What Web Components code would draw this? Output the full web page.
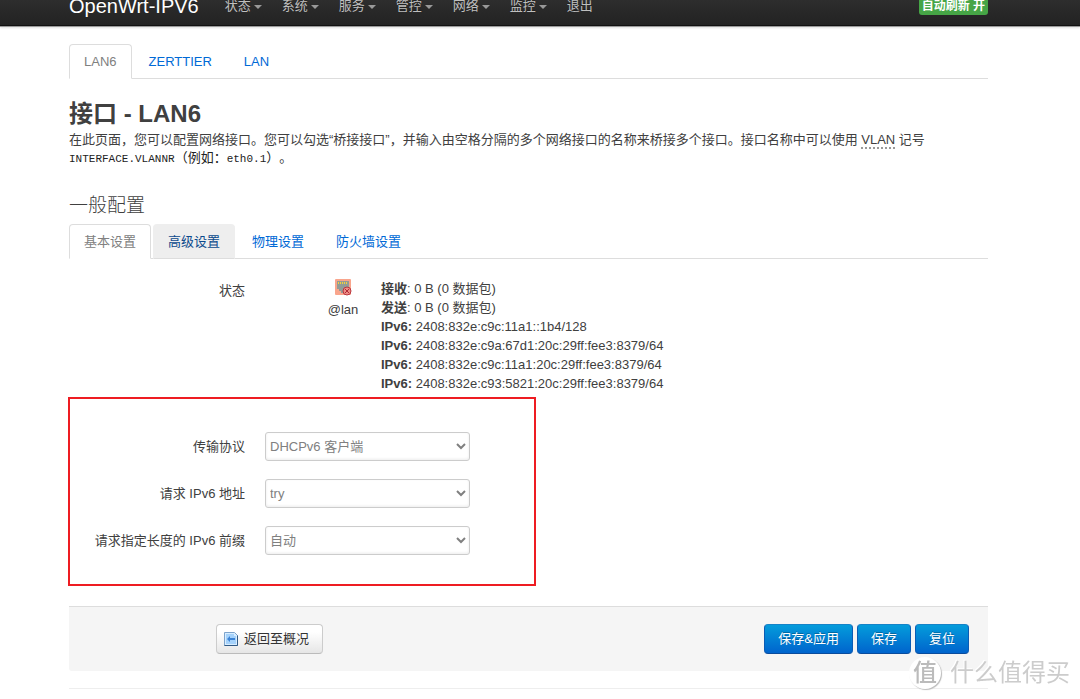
<!DOCTYPE html>
<html lang="zh-CN">
<head>
<meta charset="utf-8">
<title>OpenWrt-IPV6 - 接口</title>
<style>
  html { background: #fff; }
  body {
    margin: 0;
    font: 13px/18px "Liberation Sans", "Noto Sans CJK SC", sans-serif;
    color: #404040;
    overflow-x: hidden;
  }
</style>
</head>
<body>
<lu-topbar brand="OpenWrt-IPV6">
  <a href="#status" data-menu>状态</a>
  <a href="#system" data-menu>系统</a>
  <a href="#services" data-menu>服务</a>
  <a href="#control" data-menu>管控</a>
  <a href="#network" data-menu>网络</a>
  <a href="#monitor" data-menu>监控</a>
  <a href="#logout">退出</a>
  <button slot="refresh" type="button">自动刷新 开</button>
</lu-topbar>
<lu-page>
  <lu-tabs>
    <a href="#lan6" aria-current="page">LAN6</a>
    <a href="#zerttier">ZERTTIER</a>
    <a href="#lan">LAN</a>
  </lu-tabs>
  <lu-intro>
    <span slot="title">接口 - LAN6</span>
    <lu-description></lu-description>
  </lu-intro>
  <lu-section heading="一般配置">
    <lu-tabs>
      <a href="#general" aria-current="page">基本设置</a>
      <a href="#advanced" class="hover">高级设置</a>
      <a href="#physical">物理设置</a>
      <a href="#firewall">防火墙设置</a>
    </lu-tabs>
    <lu-status></lu-status>
    <lu-group>
      <lu-select label="传输协议" options="DHCPv6 客户端|静态地址|DHCP 客户端"></lu-select>
      <lu-select label="请求 IPv6 地址" options="try|force|none"></lu-select>
      <lu-select label="请求指定长度的 IPv6 前缀" options="自动|已禁用|48|56|64"></lu-select>
    </lu-group>
  </lu-section>
  <lu-actions></lu-actions>
  <lu-footer></lu-footer>
</lu-page>
<lu-watermark></lu-watermark>

<script>
class LuElement extends HTMLElement {
  connectedCallback() {
    if (this.shadowRoot) return;
    this.attachShadow({ mode: 'open' }).innerHTML = this.render();
  }
}

customElements.define('lu-topbar', class extends LuElement {
  render() {
    return `<style>
      :host { display: block; margin-top: -13px; padding-right: 23px; height: 39px;
        background: linear-gradient(#333, #222); box-shadow: inset 0 -1px 0 #111, 0 1px 0 #9a9a9a, 0 2px 2px rgba(0,0,0,.12); }
      .inner { display: flex; align-items: center; height: 38px; max-width: 919px; margin: 0 auto; }
      .brand { color: #fff; font-size: 20px; line-height: 38px; text-decoration: none; margin-right: 16px; text-shadow: 0 -1px 0 rgba(0,0,0,.3); }
      nav { display: flex; flex: 1; }
      ::slotted(a) { color: #bfbfbf; text-decoration: none; padding: 0 10px; line-height: 38px; text-shadow: 0 -1px 0 rgba(0,0,0,.3); }
      ::slotted(a[data-menu])::after { content: ""; display: inline-block; vertical-align: middle; margin-left: 3px;
        border: 4px solid transparent; border-top-color: #999; border-bottom: 0; }
      ::slotted(button) { font: bold 12px/16px "Liberation Sans", "Noto Sans CJK SC", sans-serif; color: #fff;
        background: #46a546; border: 0; border-radius: 3px; padding: 1px 3px; white-space: nowrap; }
    </style>
    <div class="inner"><a class="brand" href="#home">${this.getAttribute('brand')}</a>
      <nav><slot></slot></nav><slot name="refresh"></slot></div>`;
  }
});

customElements.define('lu-page', class extends LuElement {
  render() {
    return `<style>
      :host { display: block; padding: 18px 23px 0 0; }
      main { max-width: 919px; margin: 0 auto; }
    </style><main><slot></slot></main>`;
  }
});

customElements.define('lu-tabs', class extends LuElement {
  render() {
    return `<style>
      :host { display: block; border-bottom: 1px solid #ddd; }
      nav { display: flex; gap: 2px; margin-bottom: -1px; }
      ::slotted(a) { color: #0069d6; text-decoration: none; padding: 0 14px; border: 1px solid transparent;
        line-height: 33px; border-radius: 4px 4px 0 0; }
      ::slotted(a.hover) { background: #eee; border-color: #eee #eee #ddd; color: #0b4a8c; }
      ::slotted(a[aria-current]) { background: #fff; color: #808080; border-color: #ddd #ddd #fff; }
    </style><nav><slot></slot></nav>`;
  }
});

customElements.define('lu-intro', class extends LuElement {
  render() {
    return `<style>
      :host { display: block; padding-top: 17px; }
      h2 { margin: 0; font-size: 24px; line-height: 35px; }
    </style><h2><slot name="title"></slot></h2><slot></slot>`;
  }
});

customElements.define('lu-description', class extends LuElement {
  render() {
    return `<style>
      :host { display: block; }
      p { margin: 0; }
      .example { text-spacing-trim: space-all; }
      abbr { text-decoration: none; border-bottom: 2px dotted #999; line-height: 14px; display: inline-block; }
      code { font: 11px/18px "Liberation Mono", "Noto Sans CJK SC", monospace; color: #222; }
      code span { font-size: 13px; }
    </style>
    <p>在此页面，您可以配置网络接口。您可以勾选“桥接接口”，并输入由空格分隔的多个网络接口的名称来桥接多个接口。接口名称中可以使用 <abbr title="Virtual Local Area Network">VLAN</abbr> 记号</p>
    <p class="example"><code>INTERFACE.VLANNR<span>（例如：</span>eth0.1<span>）</span></code>。</p>`;
  }
});

customElements.define('lu-section', class extends LuElement {
  render() {
    return `<style>
      :host { display: block; padding-top: 24px; }
      h3 { margin: 0 0 4px; font-size: 19px; line-height: 28px; font-weight: 300; }
    </style><section><h3>${this.getAttribute('heading')}</h3><slot></slot></section>`;
  }
});

customElements.define('lu-status', class extends LuElement {
  render() {
    const rows = [
      ['接收', ': 0 B (0 数据包)'], ['发送', ': 0 B (0 数据包)'],
      ['IPv6:', ' 2408:832e:c9c:11a1::1b4/128'],
      ['IPv6:', ' 2408:832e:c9a:67d1:20c:29ff:fee3:8379/64'],
      ['IPv6:', ' 2408:832e:c9c:11a1:20c:29ff:fee3:8379/64'],
      ['IPv6:', ' 2408:832e:c93:5821:20c:29ff:fee3:8379/64'],
    ];
    return `<style>
      :host { display: grid; grid-template-columns: 176px 96px 1fr; column-gap: 20px; padding: 20px 0 4px; }
      .label { text-align: right; line-height: 24px; }
      .device { display: flex; flex-direction: column; align-items: center; gap: 5px; padding-left: 60px; }
      .info { line-height: 19px; }
      svg { display: block; }
    </style>
    <div class="label">状态</div>
    <div class="device">
      <svg width="17" height="17" viewBox="0 0 17 17" aria-hidden="true">
        <rect width="16" height="16" rx="1" fill="#f9a58c"/>
        <path d="M2 2h12v8h-2v2h-2v2H6v-2H4v-2H2z" fill="#929b96"/>
        <path d="M3 4h1M5 4h1M7 4h1M9 4h1M11 4h1" stroke="#f2d43a" stroke-width="2"/>
        <circle cx="12" cy="12" r="4" fill="#ef8d84" stroke="#b83640"/>
        <path d="M10 10l4 4M14 10l-4 4" stroke="#b02a38"/>
      </svg>
      <span>@lan</span>
    </div>
    <div class="info">${rows.map(([k, v]) => `<div><b>${k}</b>${v}</div>`).join('')}</div>`;
  }
});

customElements.define('lu-group', class extends LuElement {
  render() {
    return `<style>
      :host { display: grid; gap: 18px; box-sizing: border-box; max-width: 468px; margin-left: -1px;
        padding: 33px 0 29px; border: 2px solid #ee1c22; }
    </style><slot></slot>`;
  }
});

customElements.define('lu-select', class extends LuElement {
  render() {
    const options = this.getAttribute('options').split('|');
    return `<style>
      :host { display: grid; grid-template-columns: 175px 205px; column-gap: 20px; align-items: center; }
      label { text-align: right; }
      select { height: 29px; box-sizing: border-box; width: 100%; padding: 0; font: inherit; color: #808080; background: #fff;
        border: 1px solid #ccc; border-radius: 3px; box-shadow: inset 0 -1px 3px rgba(0,0,0,.08); }
    </style>
    <label for="field">${this.getAttribute('label')}</label>
    <select id="field">${options.map(o => `<option>${o}</option>`).join('')}</select>`;
  }
});

customElements.define('lu-actions', class extends LuElement {
  render() {
    return `<style>
      :host { display: flex; gap: 4px; margin-top: 20px; padding: 17px 19px 17px 147px; background: #f5f5f5;
        border-top: 1px solid #ddd; border-radius: 0 0 3px 3px; }
      button { font: inherit; height: 30px; padding: 0 13px; border: 1px solid; border-radius: 4px; white-space: nowrap;
        border-color: #1583c8 #0a5cb4 #0a4c9c; color: #fff; background: linear-gradient(#049cdb, #0064cd);
        text-shadow: 0 -1px 0 rgba(0,0,0,.25); }
      .back { display: flex; align-items: center; gap: 5px; margin-right: auto; padding: 0 13px 0 6px; color: #333;
        background: linear-gradient(#fff, #fff 25%, #e6e6e6); border-color: #ccc #ccc #bbb; text-shadow: none; }
    </style>
    <button class="back" type="button">
      <svg width="16" height="16" viewBox="0 0 16 16" aria-hidden="true">
        <path d="M1.500 1.500h10l3 3v10h-13z" fill="#d8edff" stroke="#7da3cb"/>
        <path d="M14.500 4.500v10h-13" fill="none" stroke="#315a85"/>
        <path d="M3 3h8v2h2v8H3z" fill="#a5d2fb"/>
        <path d="M4 8l3-3v2h5v2H7v2z" fill="#3c83d5"/>
      </svg>返回至概况</button>
    <button type="button">保存&amp;应用</button>
    <button type="button">保存</button>
    <button type="reset">复位</button>`;
  }
});

customElements.define('lu-footer', class extends LuElement {
  render() {
    return `<style>:host { display: block; margin-top: 17px; border-top: 1px solid #eee; }</style><footer></footer>`;
  }
});

customElements.define('lu-watermark', class extends LuElement {
  render() {
    return `<style>
      :host { position: fixed; right: 10px; bottom: 10px; display: flex; align-items: center; gap: 9px; pointer-events: none;
        color: #ccc; font-size: 24px; line-height: 32px; text-shadow: -1px -1px 0 #fff; }
      .logo { width: 32px; height: 32px; border-radius: 50%; background: #fff; text-align: center;
        line-height: 31px; font-weight: 500; color: #bbb; box-shadow: 1px 1px 1px #bbb; }
    </style><span class="logo">值</span><span>什么值得买</span>`;
  }
});
</script>
</body>
</html>
